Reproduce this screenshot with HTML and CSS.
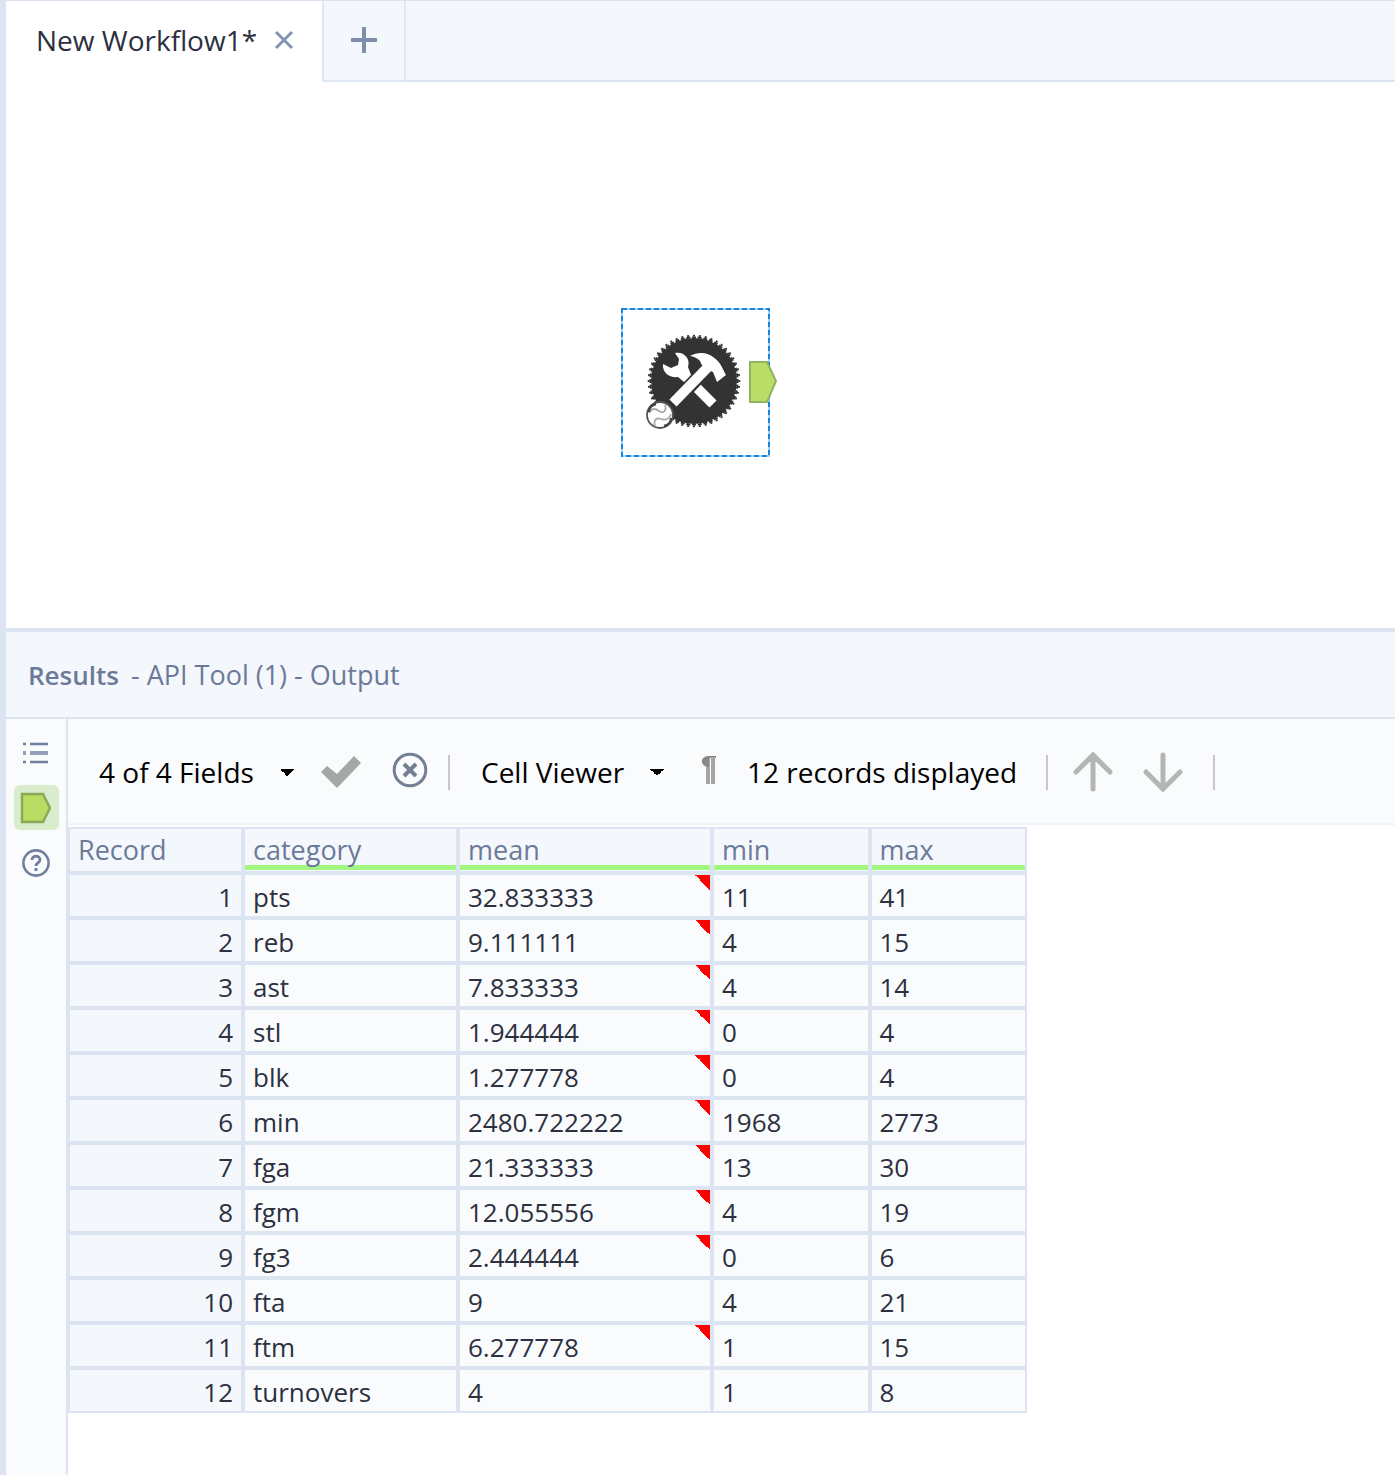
FILE: index.html
```html
<!DOCTYPE html>
<html lang="en">
<head>
<meta charset="utf-8">
<meta name="viewport" content="width=device-width, initial-scale=1">
<title>New Workflow1*</title>
<link rel="stylesheet" href="styles.css">
</head>
<body>
<nav class="tabs" aria-label="Workflows">
  <div class="tab">
    <a class="tab-name" href="#canvas">New Workflow1*</a>
    <button class="icon-button" type="button" aria-label="Close tab">
      <svg width="20" height="20" viewBox="0 0 20 20"><path d="M2 2 18 18M18 2 2 18" fill="none" stroke="#8592b4" stroke-width="3"/></svg>
    </button>
  </div>
  <button class="icon-button tab-add" type="button" aria-label="New workflow">
    <svg width="28" height="28" viewBox="0 0 28 28"><path d="M14 1V27M1 14H27" fill="none" stroke="#7f8dab" stroke-width="4"/></svg>
  </button>
</nav>

<main class="canvas" id="canvas">
  <div class="node">
    <svg width="160" height="150" viewBox="0 0 160 150" role="img" aria-label="API Tool">
      <rect x="1" y="1" width="147" height="147" fill="#fff" stroke="#9fd0f8" stroke-width="2"/>
      <rect x="1" y="1" width="147" height="147" fill="none" stroke="#1683dc" stroke-width="2" stroke-dasharray="5 3"/>
      <circle cx="73" cy="73" r="43" fill="#333"/>
      <circle cx="73" cy="73" r="43.600" fill="none" stroke="#333" stroke-width="2" pathLength="96" stroke-dasharray="1.400 .6" stroke-dashoffset=".7"/>
      <circle cx="73" cy="73" r="45.400" fill="none" stroke="#333" stroke-width="1.800" pathLength="96" stroke-dasharray=".7 1.300" stroke-dashoffset=".35"/>
      <path d="M54 45C62 43 70 50 67 59L70 67 63 74 57 69C49 70 41 65 42 56L50 60 57 57 58 51Z" fill="#fff"/>
      <path d="M76 80 92 96" stroke="#fff" stroke-width="10"/>
      <path d="M52 97 88 58" stroke="#333" stroke-width="13"/>
      <path d="M52 95 88 58" stroke="#fff" stroke-width="10"/>
      <path d="M69 48C76 44 86 44 92 49C100 54 102 62 105 67L96 74 92 64 87 62 80 56C80 52 75 49 69 48Z" fill="#fff"/>
      <circle cx="39" cy="107" r="13" fill="#fff" stroke="#555" stroke-width="1.800"/>
      <path d="M28 105C31 99 35 101 38 103C42 106 46 103 44 97M34 118C32 112 36 109 40 111C45 113 49 110 50 106" fill="none" stroke="#aaa" stroke-width="1.800"/>
      <path d="M35 96C30 97 28 100 28 104M43 118C48 117 50 113 50 110" fill="none" stroke="#444" stroke-width="2.400"/>
      <path d="M129 54H146L155 73 146 94H129Z" fill="#bbdc66" stroke="#8fb561" stroke-width="2"/>
    </svg>
  </div>
</main>

<section class="results" aria-labelledby="results-title">
  <header class="results-header">
    <h1 class="results-title" id="results-title">Results</h1>
    <span>- API Tool (1) - Output</span>
  </header>
  <div class="results-body">
    <aside class="rail">
      <button class="rail-button" type="button" aria-label="Messages">
        <svg width="28" height="24" viewBox="0 0 28 24"><g fill="none" stroke="#71809c" stroke-width="2.6"><path d="M8 3H26M8 21H26M1 3H4M1 21H4"/><path d="M8 12H26M1 12H4" stroke="#94a1b8" stroke-width="4"/></g></svg>
      </button>
      <button class="rail-button rail-active" type="button" aria-label="Output" aria-pressed="true">
        <svg width="32" height="32" viewBox="0 0 32 32"><path d="M2 2H23L30 16 23 30H2Z" fill="#b9da63" stroke="#86ac58" stroke-width="2.4"/></svg>
      </button>
      <button class="rail-button" type="button" aria-label="Help">
        <svg width="30" height="30" viewBox="0 0 30 30" fill="none" stroke="#71809c"><circle cx="15" cy="15" r="12.6" stroke-width="2.6"/><path d="M11 12C11 7 19 7 19 12C19 15 15 14.500 15 18" stroke-width="2.8"/><path d="M15 20V23" stroke-width="3"/></svg>
      </button>
    </aside>
    <div class="results-main">
      <div class="toolbar">
        <select class="picker fields" aria-label="Fields"><option>4 of 4 Fields</option></select>
        <button class="icon-button check" type="button" aria-label="Apply">
          <svg width="42" height="34" viewBox="0 0 42 34"><path d="M1 17 7 11 17 19 34 1 41 8 17 33Z" fill="#a3a7a6"/></svg>
        </button>
        <button class="icon-button cancel" type="button" aria-label="Cancel">
          <svg width="36" height="36" viewBox="0 0 36 36" fill="none" stroke="#737f92"><circle cx="18" cy="18" r="15.800" stroke-width="3"/><path d="M12 12 24 24M24 12 12 24" stroke-width="4"/></svg>
        </button>
        <span class="divider"></span>
        <select class="picker viewer" aria-label="Viewer"><option>Cell Viewer</option></select>
        <button class="icon-button pilcrow" type="button" aria-label="Show whitespace">
          <svg width="16" height="28" viewBox="0 0 16 28"><path d="M6 1H15" stroke="#888" stroke-width="2"/><path d="M7 1V28M12 1V28" fill="none" stroke="#a5a5a5" stroke-width="4"/><path d="M8 0C-2 0-1 11 8 11Z" fill="#888"/></svg>
        </button>
        <span class="count">12 records displayed</span>
        <span class="divider"></span>
        <button class="icon-button up" type="button" aria-label="Previous">
          <svg width="40" height="40" viewBox="0 0 40 40"><path d="M20 37V4M3 20 20 3 37 20" fill="none" stroke="#b4b6b6" stroke-width="5" stroke-linecap="round"/></svg>
        </button>
        <button class="icon-button down" type="button" aria-label="Next">
          <svg width="40" height="40" viewBox="0 0 40 40"><path d="M20 3V36M3 20 20 37 37 20" fill="none" stroke="#b4b6b6" stroke-width="5" stroke-linecap="round"/></svg>
        </button>
        <span class="divider"></span>
      </div>
      <table class="grid">
        <colgroup><col class="col-record"><col class="col-category"><col class="col-mean"><col class="col-value"><col class="col-value"></colgroup>
        <thead>
          <tr><th scope="col">Record</th><th class="typed" scope="col">category</th><th class="typed" scope="col">mean</th><th class="typed" scope="col">min</th><th class="typed" scope="col">max</th></tr>
        </thead>
        <tbody>
          <tr><td class="record">1</td><td>pts</td><td class="long">32.833333</td><td>11</td><td>41</td></tr>
          <tr><td class="record">2</td><td>reb</td><td class="long">9.111111</td><td>4</td><td>15</td></tr>
          <tr><td class="record">3</td><td>ast</td><td class="long">7.833333</td><td>4</td><td>14</td></tr>
          <tr><td class="record">4</td><td>stl</td><td class="long">1.944444</td><td>0</td><td>4</td></tr>
          <tr><td class="record">5</td><td>blk</td><td class="long">1.277778</td><td>0</td><td>4</td></tr>
          <tr><td class="record">6</td><td>min</td><td class="long">2480.722222</td><td>1968</td><td>2773</td></tr>
          <tr><td class="record">7</td><td>fga</td><td class="long">21.333333</td><td>13</td><td>30</td></tr>
          <tr><td class="record">8</td><td>fgm</td><td class="long">12.055556</td><td>4</td><td>19</td></tr>
          <tr><td class="record">9</td><td>fg3</td><td class="long">2.444444</td><td>0</td><td>6</td></tr>
          <tr><td class="record">10</td><td>fta</td><td>9</td><td>4</td><td>21</td></tr>
          <tr><td class="record">11</td><td>ftm</td><td class="long">6.277778</td><td>1</td><td>15</td></tr>
          <tr><td class="record">12</td><td>turnovers</td><td>4</td><td>1</td><td>8</td></tr>
        </tbody>
      </table>
    </div>
  </div>
</section>
</body>
</html>
```
FILE: styles.css
```css
:root {
  --line: #dce4f1;
  --header: #f4f7fc;
  --panel: #fafbfd;
  --muted: #6c7a99;
  --ink: #2c3040;
}

* {
  box-sizing: border-box;
}

body {
  display: flex;
  flex-direction: column;
  min-height: 100vh;
  margin: 0;
  border-left: 6px solid var(--line);
  background: #fff;
  color: var(--ink);
  font: 26px/32px "Open Sans", "Noto Sans", sans-serif;
}

svg {
  display: block;
}

button {
  padding: 0;
  border: 0;
  background: none;
}

.icon-button {
  display: flex;
  flex: none;
  align-items: center;
  justify-content: center;
}

.tabs {
  display: flex;
  height: 82px;
  border-top: 1px solid var(--line);
  background: linear-gradient(var(--line), var(--line)) bottom / 100% 2px no-repeat var(--header);
}

.tab {
  display: flex;
  align-items: center;
  gap: 17px;
  padding: 0 28px 4px 30px;
  background: #fff;
}

.tab-name {
  color: var(--ink);
  font-size: 28px;
  text-decoration: none;
  white-space: nowrap;
}

.tab-add {
  width: 84px;
  padding-bottom: 2px;
  border: solid #e2e8f3;
  border-width: 0 2px 2px;
}

.canvas {
  position: relative;
  flex: 1;
}

.node {
  position: absolute;
  left: 615px;
  top: 226px;
}

.results {
  border-top: 4px solid var(--line);
}

.results-header {
  display: flex;
  align-items: center;
  gap: 12px;
  height: 87px;
  padding-left: 22px;
  border-bottom: 2px solid var(--line);
  background: var(--header);
  color: var(--muted);
  font-size: 27px;
}

.results-title {
  margin: 0;
  font-size: 26px;
  font-weight: 600;
}

.results-body {
  display: flex;
}

.rail {
  display: flex;
  flex: none;
  flex-direction: column;
  align-items: center;
  gap: 10px;
  width: 62px;
  padding-top: 11px;
  border-right: 2px solid var(--line);
  background: var(--panel);
}

.rail-button {
  display: grid;
  place-items: center;
  width: 45px;
  height: 45px;
  border-radius: 6px;
}

.rail-active {
  background: #d9edcd;
}

.results-main {
  flex: 1;
  padding-bottom: 62px;
}

.toolbar {
  display: flex;
  align-items: center;
  height: 106px;
  margin-bottom: 2px;
  padding: 2px 0 0 31px;
  border-bottom: 2px solid #f2f3f6;
  background: var(--panel);
  color: #000;
  font-size: 28px;
}

.picker {
  flex: none;
  padding: 0;
  border: 0;
  appearance: none;
  background:
    linear-gradient(to top right, transparent 50%, #000 50%) right 7px center / 7px 7px no-repeat,
    linear-gradient(to top left, transparent 50%, #000 50%) right 0 center / 7px 7px no-repeat;
  color: #000;
  font: inherit;
}

.fields {
  width: 195px;
}

.viewer {
  width: 183px;
  margin-left: 31px;
}

.check {
  margin-left: 26px;
}

.cancel {
  margin: 0 20px 4px 30px;
}

.divider {
  flex: none;
  width: 2px;
  height: 35px;
  background: #c8c8ca;
}

.pilcrow {
  margin: 0 30px 4px 37px;
}

.count {
  margin-right: 29px;
  white-space: nowrap;
}

.up {
  margin: 0 30px 0 25px;
}

.down {
  margin-right: 30px;
}

.grid {
  width: 959px;
  border-spacing: 0;
  table-layout: fixed;
}

.col-record {
  width: 175px;
}

.col-category {
  width: 215px;
}

.col-mean {
  width: 254px;
}

.grid th,
.grid td {
  height: 45px;
  padding: 2px 8px 0;
  border: 2px solid var(--line);
  background: var(--panel);
  line-height: 36px;
  text-align: left;
}

.grid th {
  height: 46px;
  padding: 0 8px;
  background: var(--header);
  color: var(--muted);
  font-size: 27px;
  font-weight: 400;
}

.grid .typed {
  background: linear-gradient(#a1f782, #a1f782) bottom 1px left / 100% 5px no-repeat padding-box var(--header);
}

.grid .record {
  background: var(--header);
  text-align: right;
}

.grid .long {
  background: linear-gradient(to top right, transparent 50%, #f00 50%) right top / 15px 15px no-repeat padding-box var(--panel);
}
```
